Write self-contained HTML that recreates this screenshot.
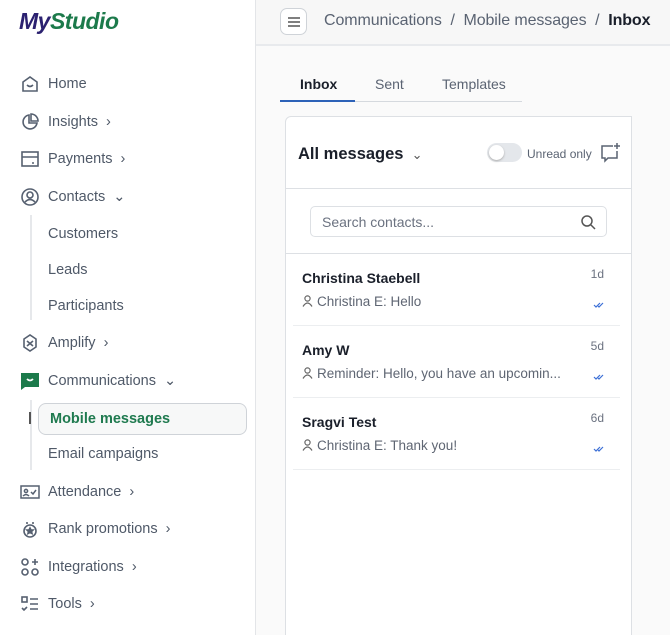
<!DOCTYPE html>
<html><head><meta charset="utf-8"><style>
*{box-sizing:border-box;margin:0;padding:0}
html,body{width:670px;height:635px;overflow:hidden}
body{font-family:"Liberation Sans",sans-serif;background:#fafafa;position:relative}
.side{position:absolute;left:0;top:0;width:256px;height:635px;background:#fff;border-right:1px solid #e3e5e8}
.logo{position:absolute;left:19px;top:8px;font-size:23px;font-weight:bold;font-style:italic;letter-spacing:-0.5px}
.logo .a{color:#2b2170}.logo .b{color:#1c7a4b}
.it{position:absolute;left:0;height:20px;display:flex;align-items:center;font-size:14.5px;color:#4f5968}
.it svg{position:absolute;left:20px;width:20px;height:20px}
.it span{position:absolute;left:48px;white-space:nowrap}
.sub{position:absolute;left:48px;font-size:14.5px;color:#4f5968}
.vl{position:absolute;left:30px;width:2px;background:#e6e8eb}
.pill{position:absolute;left:38px;top:403px;width:209px;height:32px;border:1px solid #cfd3d8;border-radius:8px;background:#f7f8f8;font-size:14.5px;font-weight:bold;color:#1f7a4f;padding:7px 0 0 11px}
.top{position:absolute;left:256px;top:0;width:414px;height:46px;background:#f7f7f7;border-bottom:2px solid #e8eaed}
.hb{position:absolute;left:24px;top:8px;width:27px;height:27px;border:1px solid #cfd3d8;border-radius:7px;background:#fff}
.bc{position:absolute;left:68px;top:12px;font-size:16px;color:#5a6372;white-space:nowrap;letter-spacing:-0.1px}
.bc b{color:#1a1f2a}
.tabs{position:absolute;left:280px;top:74px;width:242px;height:28px;border-bottom:1px solid #d5d9de;font-size:14px;color:#5a6372}
.tabs .t{position:absolute;top:2px}
.tl{position:absolute;left:0;bottom:-1px;width:75px;height:2px;background:#2d62b8}
.panel{position:absolute;left:285px;top:116px;width:347px;height:530px;background:#fff;border:1px solid #dde0e4;border-radius:6px 0 0 0}
.ph{position:absolute;left:0;top:0;width:345px;height:72px;border-bottom:1px solid #dde0e4}
.sr{position:absolute;left:0;top:72px;width:345px;height:65px;border-bottom:1px solid #dde0e4}
.sb{position:absolute;left:24px;top:17px;width:297px;height:31px;border:1px solid #dde0e4;border-radius:5px;font-size:14px;color:#6b7280;padding:7px 0 0 11px}
.row{position:absolute;left:7px;width:327px;height:72px;border-bottom:1px solid #eceef0}
.nm{position:absolute;left:9px;top:16px;font-size:14px;font-weight:bold;color:#1a1f2a}
.ms{position:absolute;left:9px;top:40px;font-size:13.5px;color:#5f6673;white-space:nowrap}
.ms svg{vertical-align:-1px;margin-right:4px}
.tm{position:absolute;right:16px;top:13px;font-size:12px;color:#6b7280}
.ck{position:absolute;right:15px;top:47px}
</style></head><body>
<div class="side">
<div class="logo"><span class="a">My</span><span class="b">Studio</span></div>
<div class="it" style="top:74px"><svg viewBox="0 0 20 20" fill="none" stroke="#566070" stroke-width="1.6"><path d="M3 8l7-5 7 5v9H3z"/><path d="M7 11q3 3 6 0"/></svg><span>Home</span></div>
<div class="it" style="top:112px"><svg viewBox="0 0 20 20" fill="none" stroke="#566070" stroke-width="1.6"><path d="M9 3a7 7 0 1 0 8 8H9z"/><path d="M11 2v7h7a7 7 0 0 0-7-7z"/></svg><span>Insights &nbsp;›</span></div>
<div class="it" style="top:149px"><svg viewBox="0 0 20 20" fill="none" stroke="#566070" stroke-width="1.6"><rect x="2" y="3" width="16" height="14"/><path d="M2 8h16M12 14h2"/></svg><span>Payments &nbsp;›</span></div>
<div class="it" style="top:187px"><svg viewBox="0 0 20 20" fill="none" stroke="#566070" stroke-width="1.6"><circle cx="10" cy="10" r="8"/><circle cx="10" cy="8" r="3"/><path d="M5 15q5-5 10 0"/></svg><span>Contacts &nbsp;⌄</span></div>
<div class="vl" style="top:215px;height:105px"></div>
<div class="sub" style="top:226px">Customers</div>
<div class="sub" style="top:262px">Leads</div>
<div class="sub" style="top:298px">Participants</div>
<div class="it" style="top:333px"><svg viewBox="0 0 20 20" fill="none" stroke="#566070" stroke-width="1.6"><path d="M4 6l6-4 6 4v8l-6 4-6-4z"/><path d="M7 8l6 5M13 8l-6 5"/></svg><span>Amplify &nbsp;›</span></div>
<div class="it" style="top:371px"><svg viewBox="0 0 20 20"><path d="M1 2h18v14H5l-4 3z" fill="#1c7a4b"/><path d="M7 8q3 3 6 0" stroke="#fff" stroke-width="1.8" fill="none"/></svg><span>Communications &nbsp;⌄</span></div>
<div class="vl" style="top:400px;height:70px"></div>
<div style="position:absolute;left:29px;top:412px;width:2px;height:12px;background:#555"></div>
<div class="pill">Mobile messages</div>
<div class="sub" style="top:446px">Email campaigns</div>
<div class="it" style="top:482px"><svg viewBox="0 0 20 20" fill="none" stroke="#566070" stroke-width="1.5"><rect x="1" y="4" width="18" height="12"/><circle cx="6" cy="9" r="1.6"/><path d="M3 14q3-3 6 0M11 10l2 2 3-4"/></svg><span>Attendance &nbsp;›</span></div>
<div class="it" style="top:519px"><svg viewBox="0 0 20 20" fill="none" stroke="#566070" stroke-width="1.6"><circle cx="10" cy="12" r="6"/><path d="M7 3v2M13 3v2"/><path d="M10 9l1 2h2l-1.5 1.5.5 2-2-1-2 1 .5-2L7 11h2z" fill="#566070"/></svg><span>Rank promotions &nbsp;›</span></div>
<div class="it" style="top:557px"><svg viewBox="0 0 20 20" fill="none" stroke="#566070" stroke-width="1.6"><circle cx="5" cy="5" r="3"/><circle cx="5" cy="15" r="3"/><circle cx="15" cy="15" r="3"/><path d="M15 2v6M12 5h6"/></svg><span>Integrations &nbsp;›</span></div>
<div class="it" style="top:594px"><svg viewBox="0 0 20 20" fill="none" stroke="#566070" stroke-width="1.6"><rect x="2" y="3" width="5" height="5"/><path d="M2 14l2 2 3-3M10 5h8M10 10h8M10 15h8"/></svg><span>Tools &nbsp;›</span></div>
</div>
<div class="top"><div class="hb"><svg width="27" height="27" viewBox="0 0 27 27" stroke="#555" stroke-width="1.5"><path d="M7 9h12M7 13h12M7 17h12"/></svg></div>
<div class="bc">Communications &nbsp;/ &nbsp;Mobile messages &nbsp;/ &nbsp;<b>Inbox</b></div></div>
<div class="tabs"><div class="t" style="left:20px;color:#1a1f2a;font-weight:bold">Inbox</div><div class="t" style="left:95px">Sent</div><div class="t" style="left:162px">Templates</div><div class="tl"></div></div>
<div class="panel">
<div class="ph">
<div style="position:absolute;left:12px;top:28px;font-size:16.5px;font-weight:bold;color:#1a1f2a">All messages <span style="font-weight:normal;font-size:13px;color:#555">&nbsp;⌄</span></div>
<div style="position:absolute;left:201px;top:26px;width:35px;height:19px;border-radius:10px;background:#e4e7eb"><div style="position:absolute;left:2px;top:2px;width:15px;height:15px;border-radius:50%;background:#fff;box-shadow:0 1px 2px #aaa"></div></div>
<div style="position:absolute;left:241px;top:30px;font-size:12px;color:#5a6372">Unread only</div>
<svg style="position:absolute;left:313px;top:25px" width="22" height="22" viewBox="0 0 22 22" fill="none" stroke="#5a6372" stroke-width="1.5"><path d="M14 4H3v12h3v3l3-3h9V9"/><path d="M18 1v6M15 4h6"/></svg>
</div>
<div class="sr"><div class="sb">Search contacts...<svg style="position:absolute;right:10px;top:7px" width="16" height="16" viewBox="0 0 16 16" fill="none" stroke="#555" stroke-width="1.5"><circle cx="7" cy="7" r="5"/><path d="M11 11l4 4"/></svg></div></div>
<div class="row" style="top:137px"><div class="nm">Christina Staebell</div><div class="ms"><svg width="11" height="12" viewBox="0 0 11 12" fill="none" stroke="#666" stroke-width="1.2"><circle cx="5.5" cy="3.5" r="2.6"/><path d="M1 11.5q4.5-7 9 0"/></svg>Christina E: Hello</div><div class="tm">1d</div><svg class="ck" width="12" height="8" viewBox="0 0 12 8" fill="none" stroke="#3b6fd6" stroke-width="1.2"><path d="M1 4l2 2 4-4M5 5l1 1 4-4"/></svg></div>
<div class="row" style="top:209px"><div class="nm">Amy W</div><div class="ms"><svg width="11" height="12" viewBox="0 0 11 12" fill="none" stroke="#666" stroke-width="1.2"><circle cx="5.5" cy="3.5" r="2.6"/><path d="M1 11.5q4.5-7 9 0"/></svg>Reminder: Hello, you have an upcomin...</div><div class="tm">5d</div><svg class="ck" width="12" height="8" viewBox="0 0 12 8" fill="none" stroke="#3b6fd6" stroke-width="1.2"><path d="M1 4l2 2 4-4M5 5l1 1 4-4"/></svg></div>
<div class="row" style="top:281px"><div class="nm">Sragvi Test</div><div class="ms"><svg width="11" height="12" viewBox="0 0 11 12" fill="none" stroke="#666" stroke-width="1.2"><circle cx="5.5" cy="3.5" r="2.6"/><path d="M1 11.5q4.5-7 9 0"/></svg>Christina E: Thank you!</div><div class="tm">6d</div><svg class="ck" width="12" height="8" viewBox="0 0 12 8" fill="none" stroke="#3b6fd6" stroke-width="1.2"><path d="M1 4l2 2 4-4M5 5l1 1 4-4"/></svg></div>
</div>
</body></html>
